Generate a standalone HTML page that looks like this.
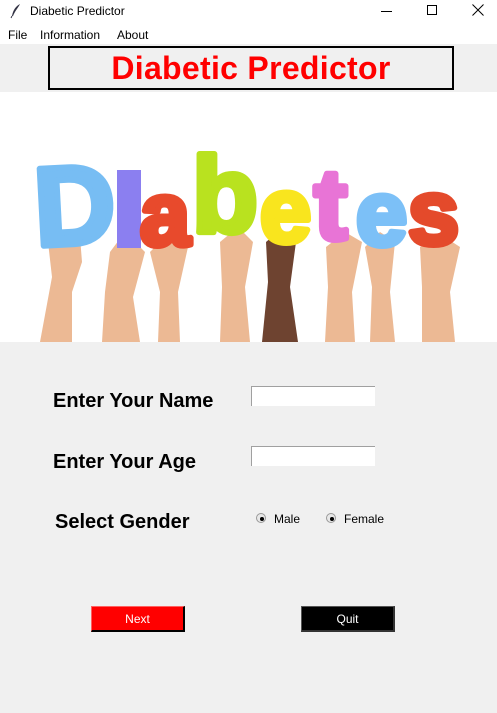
<!DOCTYPE html>
<html><head><meta charset="utf-8"><style>
*{margin:0;padding:0;box-sizing:border-box}
body{width:497px;height:713px;background:#f0f0f0;font-family:"Liberation Sans",Arial,sans-serif;position:relative;overflow:hidden}
.abs{position:absolute}
.t{font-size:12px;color:#000}
.lbl{font-size:20px;font-weight:bold;color:#000}
.entry{background:#fff;border-top:1px solid #a0a0a0;border-left:1px solid #a0a0a0;width:124px;height:20px}
.radio{width:10px;height:10px;border-radius:50%;background:#e8e8e8;border:1px solid #999}
.radio:after{content:"";position:absolute;left:2.5px;top:2.5px;width:4px;height:4px;border-radius:50%;background:#000}
.btn{width:94px;height:26px;font-size:12px;display:flex;align-items:center;justify-content:center;border:1px solid #000;border-right-width:2px;border-bottom-width:2px}
svg text{stroke-width:6;stroke-linejoin:round}
</style></head><body>
<div class="abs" style="left:0;top:0;width:497px;height:24px;background:#fff"></div>
<svg class="abs" style="left:10px;top:3px" width="12" height="16" viewBox="0 0 12 16"><path d="M10 1 C6 3 3 7 2 13 L3 13 C5 8 8 5 10 1Z" fill="#334" /><path d="M2 13 L1 15" stroke="#334"/></svg>
<div class="abs t" style="left:30px;top:4px">Diabetic Predictor</div>
<div class="abs" style="left:381px;top:11px;width:11px;height:1px;background:#000"></div>
<div class="abs" style="left:427px;top:5px;width:10px;height:10px;border:1px solid #000"></div>
<svg class="abs" style="left:472px;top:4px" width="12" height="12"><path d="M0.5 0.5 L11.5 11.5 M11.5 0.5 L0.5 11.5" stroke="#000" stroke-width="1"/></svg>
<div class="abs" style="left:0;top:24px;width:497px;height:20px;background:#fff"></div>
<div class="abs t" style="left:8px;top:28px">File</div>
<div class="abs t" style="left:40px;top:28px">Information</div>
<div class="abs t" style="left:117px;top:28px">About</div>
<div class="abs" style="left:48px;top:46px;width:406px;height:44px;border:2px solid #000;text-align:center;color:#ff0000;font-weight:bold;font-size:32px;line-height:40px;letter-spacing:0.3px">Diabetic Predictor</div>
<div class="abs" style="left:0;top:92px;width:497px;height:250px;background:#fff"></div>
<svg class="abs" style="left:0;top:92px" width="497" height="250">
<g fill="#ecb994">
<path d="M40 250 L52 185 L48 150 L60 138 L80 145 L82 170 L72 200 L72 250Z"/>
<path d="M102 250 L105 200 L110 160 L125 140 L145 160 L133 205 L140 250Z"/>
<path d="M158 250 L160 200 L150 160 L170 140 L188 155 L178 200 L180 250Z"/>
<path d="M220 250 L222 195 L220 150 L238 135 L253 150 L245 195 L250 250Z"/>
<path d="M325 250 L328 195 L326 155 L345 140 L362 150 L352 200 L355 250Z"/>
<path d="M370 250 L372 195 L365 155 L380 140 L395 150 L390 200 L395 250Z"/>
<path d="M422 250 L422 195 L420 155 L440 142 L460 155 L450 200 L455 250Z"/>
</g>
<path d="M262 250 L268 190 L266 150 L280 138 L296 150 L290 195 L298 250Z" fill="#6e4330"/>
<text x="34" y="152" font-family="Liberation Sans" font-weight="bold" font-size="112" fill="#77bdf3" stroke="#77bdf3" transform="rotate(-3 75 110)">D</text>
<rect x="117" y="78" width="24" height="78" fill="#8b7ff0"/>
<text x="140" y="153" font-family="Liberation Sans" font-weight="bold" font-size="90" fill="#e84a2c" stroke="#e84a2c">a</text>
<text x="192" y="140" font-family="Liberation Sans" font-weight="bold" font-size="108" fill="#b9e21f" stroke="#b9e21f">b</text>
<text x="260" y="150" font-family="Liberation Sans" font-weight="bold" font-size="92" fill="#f9e51e" stroke="#f9e51e">e</text>
<text x="314" y="147" font-family="Liberation Sans" font-weight="bold" font-size="100" fill="#e874d6" stroke="#e874d6">t</text>
<text x="356" y="153" font-family="Liberation Sans" font-weight="bold" font-size="92" fill="#7cc0f7" stroke="#7cc0f7">e</text>
<text x="408" y="152" font-family="Liberation Sans" font-weight="bold" font-size="92" fill="#e44a2b" stroke="#e44a2b">s</text>
</svg>
<div class="abs lbl" style="left:53px;top:390px">Enter Your Name</div>
<div class="abs entry" style="left:251px;top:386px"></div>
<div class="abs lbl" style="left:53px;top:451px">Enter Your Age</div>
<div class="abs entry" style="left:251px;top:446px"></div>
<div class="abs lbl" style="left:55px;top:511px">Select Gender</div>
<div class="abs radio" style="left:256px;top:513px"></div>
<div class="abs t" style="left:274px;top:512px">Male</div>
<div class="abs radio" style="left:326px;top:513px"></div>
<div class="abs t" style="left:344px;top:512px">Female</div>
<div class="abs btn" style="left:91px;top:606px;background:#ff0000;color:#fff;border-color:#ff6060 #000 #000 #ff6060">Next</div>
<div class="abs btn" style="left:301px;top:606px;background:#000;color:#fff;border-color:#555 #333 #333 #555">Quit</div>
</body></html>
